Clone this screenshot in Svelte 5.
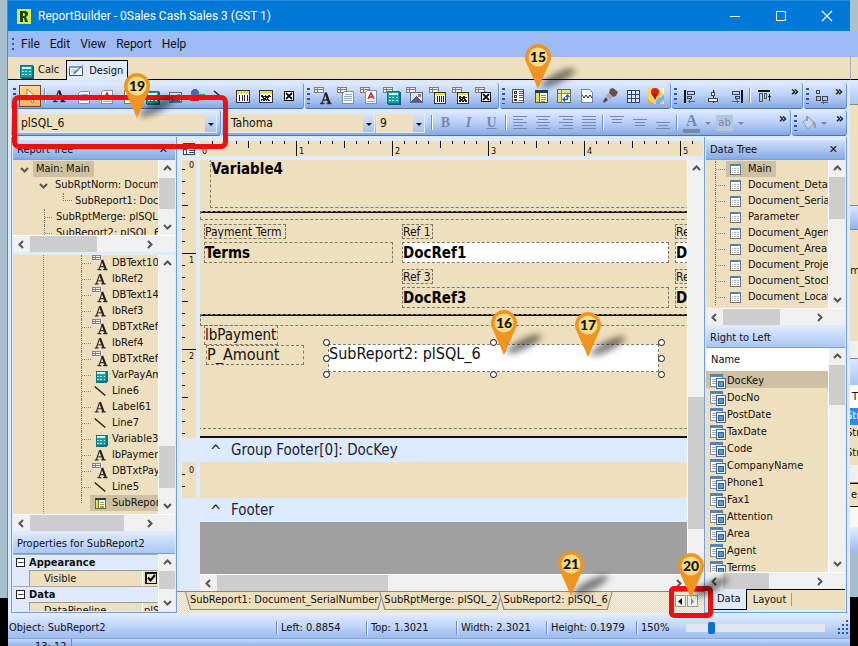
<script>
  const menus = ['File', 'Edit', 'View', 'Report', 'Help'];

  const standardTools = ['label', 'memo', 'rich', 'sysvar', 'calc', 'image', 'shapes', 'line', 'barcode', 'matrix', 'check'];
  const dataTools = ['db-label', 'db-memo', 'db-rich', 'db-calc', 'db-image', 'db-barcode', 'db-matrix', 'db-check'];
  const advancedTools = ['region', 'subreport', 'crosstab', 'pagebreak', 'paint', 'grid', 'map'];
  const alignTools = ['align-left', 'align-center', 'align-right'];

  const objects = [
    ['dbtext', 'DBText10'], ['label', 'lbRef2'], ['dbtext', 'DBText14'], ['label', 'lbRef3'],
    ['dbtext', 'DBTxtRef3'], ['label', 'lbRef4'], ['dbtext', 'DBTxtRef4'], ['calc', 'VarPayAmount'],
    ['line', 'Line6'], ['label', 'Label61'], ['line', 'Line7'], ['calc', 'Variable3'],
    ['label', 'lbPayment'], ['dbtext', 'DBTxtPayment'], ['line', 'Line5'], ['subreport', 'SubReport2']
  ];

  const pipelines = [
    'Main', 'Document_Detail', 'Document_SerialNumber', 'Parameter', 'Document_Agent',
    'Document_Area', 'Document_Project', 'Document_Stock', 'Document_Location'
  ];

  const fields = [
    'DocKey', 'DocNo', 'PostDate', 'TaxDate', 'Code', 'CompanyName', 'Phone1',
    'Fax1', 'Attention', 'Area', 'Agent', 'Terms'
  ];

  const pages = ['SubReport1: Document_SerialNumber', 'SubRptMerge: plSQL_2', 'SubReport2: plSQL_6'];
  const measures = ['Left: 0.8854', 'Top: 1.3021', 'Width: 2.3021', 'Height: 0.1979'];

  const pins = [
    { n: 15, x: 538, y: 89 },
    { n: 19, x: 137, y: 118 },
    { n: 16, x: 504, y: 355 },
    { n: 17, x: 588, y: 357 },
    { n: 21, x: 571, y: 596 },
    { n: 20, x: 691, y: 598 }
  ];

  const ticks = Array.from({ length: 120 }, (_, i) => i);
  const inches = Array.from({ length: 16 }, (_, i) => i);
  const handles = [
    [0, 0], [167, 0], [335, 0], [0, 16], [335, 16], [0, 32], [167, 32], [335, 32]
  ];

  let pipeline = $state('plSQL_6');
  let font = $state('Tahoma');
  let size = $state('9');
  let visible = $state(true);
</script>

{#snippet dbmark()}
  <path d="M.5 .5h9v5h-9zM.5 2.5h9M3.500 .5v5" fill="#eee" stroke="#7d7d7d" />
{/snippet}

{#snippet icon(name)}
  <svg class="icon" width="18" height="18" viewBox="0 0 18 18" aria-hidden="true" fill="none" shape-rendering="crispEdges">
    {#if name.startsWith('db-') && name !== 'db-label'}{@render dbmark()}{/if}
    {#if name === 'pointer'}
      <path d="M6 2v12l3-3 2 5 2-1-2-5h4z" fill="#fff" stroke="#a8772a" shape-rendering="auto" />
    {:else if name === 'label'}
      <g shape-rendering="auto"><path d="M8.500 4L5 14M3 14.500h4.500M10.500 14.500h5M6.500 11h6" stroke="#333" stroke-width="1.300" /><path d="M9 3.500l4 11" stroke="#222" stroke-width="2.400" /></g>
    {:else if name === 'dbtext' || name === 'db-label'}
      {@render dbmark()}
      <g shape-rendering="auto"><path d="M11.500 6L8 16M6 16.500h4.500M12.500 16.500h5M9 13h5" stroke="#333" stroke-width="1.300" /><path d="M11.500 5.500l4 11" stroke="#222" stroke-width="2.400" /></g>
    {:else if name === 'memo' || name === 'db-memo'}
      <path d="M7.500 4.500h9v12h-11v-10z" fill="#fff" stroke="#7d8fae" /><path d="M8 7.500h7M7 9.500h8M7 11.500h8M7 13.500h8" stroke="#8aa6cf" />
    {:else if name === 'rich' || name === 'db-rich'}
      <path d="M7.500 3.500h9v13h-11v-11z" fill="#fff" stroke="#7d8fae" /><path d="M8 12l3-6 3 6M9 10h4" stroke="#d0202f" stroke-width="1.500" shape-rendering="auto" /><path d="M7 14.500h8" stroke="#8aa6cf" />
    {:else if name === 'sysvar'}
      <path d="M5.500 3.500h11v13h-11z" fill="#fff7c8" stroke="#827b3b" /><path d="M8 6.500h6M8 9.500h6M8 12.500h6" stroke="#344" />
    {:else if name === 'calc' || name === 'db-calc'}
      <path d="M4.500 4.500h12v12h-12z" fill="#199d9d" stroke="#087580" /><path d="M6 7h9" stroke="#d8ffff" stroke-width="2" /><path d="M6 10.500h2m1 0h2m2 0h2M6 13.500h2m1 0h2m2 0h2" stroke="#c8f5f5" /><path d="M17 5v12H5" stroke="#175d70" />
    {:else if name === 'image' || name === 'db-image'}
      <path d="M4.500 5.500h12v10h-12z" fill="#dbe7fb" stroke="#586d92" /><path d="M5 15l5-6 6 6z" fill="#4b5e8d" /><path d="M12 7h3v3h-3z" fill="#e06a3a" />
    {:else if name === 'shapes'}
      <circle cx="7" cy="6" r="4" fill="#5a5fb8" /><path d="M8 7h9v6H8z" fill="#43a047" /><path d="M2 14l4-5 5 5z" fill="#d23" />
    {:else if name === 'line'}
      <path d="M3 4l12 10" stroke="#222" stroke-width="1.600" shape-rendering="auto" />
    {:else if name === 'barcode'}
      <path d="M2.500 3.500h13v12h-13z" fill="#fff" stroke="#333" /><path d="M3 4h12v3H3z" fill="#e8dc4a" /><path d="M5.500 8v6M8.500 8v6M10.500 8v6M13.500 8v6" stroke="#222" />
    {:else if name === 'db-barcode'}
      <path d="M5.500 5.500h11v11h-11z" fill="#fff" stroke="#333" /><path d="M6 6h10v2H6z" fill="#e8dc4a" /><path d="M8.500 9v6M10.500 9v6M12.500 9v6M14.500 9v6" stroke="#222" />
    {:else if name === 'matrix'}
      <path d="M2.500 3.500h13v12h-13z" fill="#fff" stroke="#333" /><path d="M3 4h12v3H3z" fill="#e8dc4a" /><path d="M4 8h2v1h2V8h1v1h2V8h2v1h1v1h-2v1h-1v1h1v1h1v1h-2v-1h-1v1H9v-1H8v1H6v-1H5v1H4v-2h2v-1H5v-1H4z" fill="#222" /><path d="M7 10h1v1H7zM9 11h1v1H9z" fill="#fff" />
    {:else if name === 'db-matrix'}
      <path d="M5.500 5.500h11v11h-11z" fill="#fff" stroke="#333" /><path d="M6 6h10v2H6z" fill="#e8dc4a" /><path d="M7 9h2v1h2V9h2v1h2v1h-2v1h1v1h1v2h-2v-1h-1v1h-2v-1H9v1H7v-2h1v-1H7z" fill="#222" /><path d="M9 11h1v1H9zM11 12h1v1h-1z" fill="#fff" />
    {:else if name === 'check'}
      <path d="M4.500 4.500h9v9h-9z" fill="#fff" stroke="#111" /><path d="M6 6l6 6M12 6l-6 6" stroke="#111" stroke-width="1.800" shape-rendering="auto" />
    {:else if name === 'db-check'}
      <path d="M6.500 5.500h9v9h-9z" fill="#fff" stroke="#111" /><path d="M8 7l6 6M14 7l-6 6" stroke="#111" stroke-width="1.800" shape-rendering="auto" />
    {:else if name === 'region'}
      <path d="M3.500 2.500h11v13h-11z" fill="#fff" stroke="#555" /><path d="M5.500 4.500h2v2h-2zM5.500 8.500h2v2h-2zM5.500 12.500h2v1h-2z" stroke="#333" /><path d="M9.500 4.500h4M9.500 6.500h4M9.500 8.500h4M9.500 10.500h4M9.500 13.500h4" stroke="#555" />
    {:else if name === 'subreport'}
      <path d="M3.500 3.500h12v12h-12z" fill="#fffce0" stroke="#4c5d24" /><path d="M3 3h13v3H3z" fill="#203d55" /><path d="M4 6h3v9H4z" fill="#e9e04d" /><path d="M7.500 6v10" stroke="#4c5d24" /><path d="M9 8.500h5M9 10.500h5M9 12.500h5M9 14.500h4" stroke="#86943b" />
    {:else if name === 'crosstab'}
      <path d="M2.500 2.500h13v13h-13z" fill="#fff" stroke="#5b6c50" /><path d="M3 3h3v3H3zM7 3h8v3H7zM3 7h3v8H3z" fill="#e7e18c" /><path d="M3 6.500h12M6.500 3v12" stroke="#7b8a60" /><path d="M8 12.500h4M12.500 8v5M10 10.500l-2 2 2 2M10.500 10l2-2 2 2" stroke="#23619b" stroke-width="1.300" shape-rendering="auto" />
    {:else if name === 'pagebreak'}
      <path d="M3.500 2.500h8l3 3v10h-11z" fill="#fff" stroke="#6d83b0" /><path d="M4 8l2 3 2-3 2 3 2-3 2 3" stroke="#222" shape-rendering="auto" />
    {:else if name === 'paint'}
      <g shape-rendering="auto"><path d="M9 2l3-1 5 4-2 4-3 1-4-4z" fill="#6b4e44" /><path d="M7 6l5 4-3 3-4-4z" fill="#a9a9b3" /><path d="M5 10l2 3-4 3-1-2z" fill="#4a4a58" /></g>
    {:else if name === 'grid'}
      <path d="M3.500 3.500h12v12h-12zM7.500 3v13M11.500 3v13M3 7.500h13M3 11.500h13" fill="#dce8ff" stroke="#2b3f86" />
    {:else if name === 'map'}
      <path d="M1 1h16v16H1z" fill="#f5d56c" /><path d="M10 1h7v6z" fill="#fff2c6" /><path d="M9 13l8-5v4l-5 5H9z" fill="#76b8e6" /><path d="M1 12l7 5H1z" fill="#efa93c" /><g shape-rendering="auto"><circle cx="8" cy="5" r="4" fill="#d5241b" /><path d="M5 7h6l-3 6z" fill="#b8160e" /></g>
    {:else if name === 'align-left'}
      <path d="M4 3v13" stroke="#111" stroke-width="2" /><path d="M6.500 4.500h7v3h-7zM6.500 9.500h4v2h-4z" stroke="#444" /><path d="M7 14.500h7M9.500 12.500l-2 2 2 2" stroke="#336aa8" />
    {:else if name === 'align-center'}
      <path d="M9 3v13" stroke="#111" /><path d="M7.500 5.500h3v3h-3zM4.500 11.500h9v3h-9z" fill="#eef4ff" stroke="#444" />
    {:else if name === 'align-right'}
      <path d="M15 3v13" stroke="#111" stroke-width="2" /><path d="M5.500 4.500h7v3h-7zM8.500 9.500h4v2h-4z" stroke="#444" /><path d="M5 14.500h7M9.500 12.500l2 2-2 2" stroke="#336aa8" />
    {:else if name === 'align-top'}
      <path d="M3 4h12" stroke="#111" stroke-width="2" /><path d="M4.500 6.500h3v8h-3zM9.500 6.500h2v5h-2z" stroke="#555" /><path d="M14.500 7v7M13 9.500h3" stroke="#222" />
    {:else if name === 'nudge'}
      <path d="M3.500 3.500h3v3h-3zM3.500 9.500h4v4h-4zM9.500 9.500h5v4h-5z" stroke="#444" /><path d="M8 15.500h7M10 14v3" stroke="#336aa8" />
    {:else if name === 'table'}
      <path d="M2.500 3.500h12v12h-12z" fill="#fff" stroke="#5d6475" /><path d="M2 3h13v3H2z" fill="#517fbd" /><path d="M4 8.500h9M4 10.500h9M4 12.500h9" stroke="#a1a7b5" stroke-dasharray="2 1" />
    {:else if name === 'field'}
      <path d="M1.500 2.500h12v12h-12z" fill="#fff" stroke="#7f8da6" /><path d="M1 2h13v3H1z" fill="#5681bd" /><path d="M3 7.500h5M3 9.500h5M3 11.500h5" stroke="#a1a7b5" /><path d="M7.500 6.500h9v10h-9z" fill="#eaf3ff" stroke="#47698f" /><path d="M9.500 9.500h5v5h-5z" fill="#5c97d3" stroke="#325f9c" />
    {:else if name === 'bucket'}
      <g shape-rendering="auto" stroke="#8b9bb5"><path d="M4 8l6-5 5 6-6 6z" fill="#cad6ea" /><path d="M8 2v5M14 8q3 3 2 6" stroke-width="2" /></g>
    {/if}
  </svg>
{/snippet}

{#snippet chevron(dir)}
  <svg class="chev" width="17" height="17" viewBox="0 0 17 17" aria-hidden="true">
    <path
      d={{ up: 'M5 10l3.500-3.500L12 10', down: 'M5 7l3.500 3.500L12 7', left: 'M10 5L6.500 8.500 10 12', right: 'M7 5l3.500 3.500L7 12' }[dir]}
      fill="none" stroke="#555" stroke-width="2" />
  </svg>
{/snippet}

{#snippet vscroll(before, thumb, after)}
  <div class="vscroll">
    {@render chevron('up')}
    <div style:flex={before}></div>
    <div class="thumb" style:flex={thumb}></div>
    <div style:flex={after}></div>
    {@render chevron('down')}
  </div>
{/snippet}

{#snippet hscroll(thumb, after)}
  <div class="hscroll">
    {@render chevron('left')}
    <div class="thumb" style:flex={thumb}></div>
    <div style:flex={after}></div>
    {@render chevron('right')}
  </div>
{/snippet}

{#snippet tool(name)}
  <button class="tool" aria-label={name}>{@render icon(name)}</button>
{/snippet}

{#snippet lines(rows, y)}
  <button class="tool" aria-label="Align text">
    <svg width="18" height="18" viewBox="0 0 18 18" shape-rendering="crispEdges" aria-hidden="true">
      {#each rows as [x, w], i}
        <rect {x} y={y + i * 3} width={w} height="1" fill="#7489ab" />
      {/each}
    </svg>
  </button>
{/snippet}

{#snippet drop()}
  <svg class="drop" width="11" height="24" viewBox="0 0 11 24" aria-hidden="true"><path d="M3 11h6l-3 3z" fill="#111" /></svg>
{/snippet}

{#snippet greyDrop()}
  <svg width="12" height="18" viewBox="0 0 12 18" aria-hidden="true"><path d="M3 8h6l-3 3z" fill="#7489ab" /></svg>
{/snippet}

{#snippet vruler(height, first)}
  <svg class="vruler" width="14" {height} shape-rendering="crispEdges" aria-hidden="true">
    {#each ticks as i}
      {#if i > 0 && (i * 12 - first) < height}
        <rect x="0" y={i * 12 - first} width={i % 8 === 0 ? 14 : i % 4 === 0 ? 6 : 3} height="1" fill="#111" />
      {/if}
    {/each}
    {#each inches as i}
      {#if i * 96 < height}<text x="7" y={i * 96 + (i ? 10 : 11) - first}>{i}</text>{/if}
    {/each}
  </svg>
{/snippet}

<div class="desktop">
  <div class="edge"></div>

  <main class="window">
    <header class="title">
      <svg width="14" height="15" viewBox="0 0 14 15" aria-hidden="true">
        <path d="M0 0h14v15H0z" fill="#d8e94e" /><path d="M3 2h5q3 0 3 3 0 2-2 3l2 5H8L7 9H6v4H3zM6 4v3h1q1 0 1-1.500T7 4z" fill="#17460f" fill-rule="evenodd" />
      </svg>
      <h1>ReportBuilder - 0Sales Cash Sales 3 (GST 1)</h1>
      <div class="controls">
        <button aria-label="Minimize"><svg width="12" height="12" viewBox="0 0 12 12"><path d="M1 6.500h10" stroke="#fff" /></svg></button>
        <button aria-label="Maximize"><svg width="12" height="12" viewBox="0 0 12 12"><path d="M1.500 1.500h9v9h-9z" fill="none" stroke="#fff" /></svg></button>
        <button aria-label="Close"><svg width="12" height="12" viewBox="0 0 12 12"><path d="M1 1l10 10M11 1L1 11" stroke="#fff" stroke-width="1.200" /></svg></button>
      </div>
    </header>

    <nav class="menu">
      <i class="grip short"></i>
      {#each menus as m}<button>{m}</button>{/each}
    </nav>

    <div class="modes">
      <button class="mode">{@render icon('calc')}Calc</button>
      <button class="mode on">
        <svg width="18" height="18" viewBox="0 0 18 18" aria-hidden="true">
          <path d="M1.500 4.500h13v9h-13z" fill="#fff" stroke="#40566f" /><path d="M1 4h14v2H1z" fill="#7c9cc6" /><path d="M16 2l-8 9-3 2 1-3z" fill="#4b78a8" /><path d="M3 8h5M3 10h3" stroke="#9ab" />
        </svg>Design
      </button>
    </div>

    <div class="bars">
      <div class="bar">
        <div class="seg">
          <i class="grip"></i>
          <button class="tool picked" aria-label="Select">{@render icon('pointer')}</button>
          <i class="sep"></i>
          {#each standardTools as t}{@render tool(t)}{/each}
        </div>
        <div class="seg">
          <i class="grip"></i>
          {#each dataTools as t}{@render tool(t)}{/each}
        </div>
        <div class="seg">
          <i class="grip"></i>
          {#each advancedTools as t}{@render tool(t)}{/each}
        </div>
        <div class="seg grow">
          <i class="grip"></i>
          {#each alignTools as t}{@render tool(t)}{/each}
          <i class="sep"></i>
          {@render tool('align-top')}
          <button class="more">»</button>
        </div>
        <div class="seg tail">
          <i class="grip"></i>
          {@render tool('nudge')}
          <button class="more">»</button>
        </div>
      </div>

      <div class="bar">
        <div class="seg">
          <i class="grip"></i>
          <label class="combo pipe">
            <select bind:value={pipeline} aria-label="Data pipeline"><option>plSQL_6</option><option>plSQL_2</option></select>
            {@render drop()}
          </label>
        </div>
        <div class="seg grow">
          <label class="combo face">
            <select bind:value={font} aria-label="Font"><option>Tahoma</option></select>
            {@render drop()}
          </label>
          <label class="combo points">
            <select bind:value={size} aria-label="Font size"><option>9</option><option>10</option></select>
            {@render drop()}
          </label>
          <i class="sep"></i>
          <button class="tool letter b">B</button>
          <button class="tool letter i">I</button>
          <button class="tool letter u">U</button>
          <i class="sep"></i>
          {@render lines([[2, 14], [2, 10], [2, 14], [2, 10], [2, 14]], 2)}
          {@render lines([[2, 14], [4, 10], [2, 14], [4, 10], [2, 14]], 2)}
          {@render lines([[2, 14], [6, 10], [2, 14], [6, 10], [2, 14]], 2)}
          {@render lines([[2, 14], [2, 14], [2, 14], [2, 14], [2, 14]], 2)}
          <i class="sep"></i>
          {@render lines([[2, 14], [4, 10], [4, 10]], 2)}
          {@render lines([[2, 14], [4, 10], [4, 10]], 5)}
          {@render lines([[2, 14], [4, 10], [2, 14]], 8)}
          <i class="sep"></i>
          <button class="tool letter color">A</button>
          {@render greyDrop()}
          <button class="tool letter mark">ab</button>
          {@render greyDrop()}
          <button class="more">»</button>
        </div>
        <div class="seg tail two">
          <i class="grip"></i>
          {@render tool('bucket')}
          {@render greyDrop()}
          <button class="more">»</button>
        </div>
      </div>
    </div>

    <div class="body">
      <aside class="panel left">
        <h2 class="dark">Report Tree <button aria-label="Close report tree">✕</button></h2>
        <div class="pane outline">
          <ul class="tree">
            <li class="root">{@render chevron('down')}<span class="hit">Main: Main</span></li>
            <li class="kid">{@render chevron('down')}<span>SubRptNorm: Document_Detail</span></li>
            <li class="leaf"><i class="elbow"></i><span>SubReport1: Document_SerialNumber</span></li>
            <li class="twig"><i class="elbow"></i><span>SubRptMerge: plSQL_2</span></li>
            <li class="twig"><i class="elbow"></i><span>SubReport2: plSQL_6</span></li>
          </ul>
          {@render vscroll(1, 31, 9)}
        </div>
        {@render hscroll(66, 44)}
        <div class="gap"></div>
        <div class="pane objects">
          <ul class="tree branch">
            {#each objects as [kind, name], i}
              <li class:last={i === objects.length - 1}><i class="dots"></i><span class="node">{@render icon(kind)}{name}</span></li>
            {/each}
          </ul>
          {@render vscroll(172, 42, 9)}
        </div>
        {@render hscroll(93, 17)}
        <div class="gap"></div>
        <h2>Properties for SubReport2</h2>
        <div class="pane props">
          <div class="list">
            <div class="cat"><button aria-label="Collapse">−</button>Appearance</div>
            <div class="prop">
              <label for="vis">Visible</label>
              <span class="tick">
                <input id="vis" type="checkbox" bind:checked={visible} />
                {#if visible}<svg width="12" height="12" viewBox="0 0 12 12" aria-hidden="true"><path d="M3 5.500l2.500 3L10 3" fill="none" stroke="#000" stroke-width="2" /></svg>{/if}
              </span>
            </div>
            <div class="cat"><button aria-label="Collapse">−</button>Data</div>
            <div class="prop"><span class="key">DataPipeline</span><span>plSQL_6</span></div>
          </div>
          {@render vscroll(0, 18, 5)}
        </div>
      </aside>

      <section class="center">
        <div class="toprule">
          <svg class="corner" width="14" height="15" viewBox="0 0 14 15" shape-rendering="crispEdges" aria-hidden="true">
            <path d="M1.500 2.500h11v11h-11z" fill="#fff" stroke="#29466b" /><path d="M1 3h12v2H1z" fill="#6c93c8" /><path d="M4.500 5v8M2 8.500h3M7 7.500h5M7 9.500h5M7 11.500h5" stroke="#29466b" />
          </svg>
          <svg class="hruler" height="15" shape-rendering="crispEdges" aria-hidden="true">
            {#each ticks as i}
              {#if i > 0}<rect x={i * 12} y="0" width="1" height={i % 8 === 0 ? 15 : i % 4 === 0 ? 7 : 3} fill="#111" />{/if}
            {/each}
            {#each inches as i}<text x={i * 96 + (i ? 3 : 2)} y="13">{i}</text>{/each}
          </svg>
        </div>

        <div class="work">
          <div class="bands">
            <div class="band">
              {@render vruler(278, 3)}
              <div class="surface detail">
                <div class="box big high" style:left="10px" style:top="-1px" style:width="700px" style:height="49px">Variable4</div>
                <div class="rule" style:top="51px"></div>
                <div class="box" style:left="0px" style:top="51px" style:width="700px" style:height="9px"></div>
                <div class="box small" style:left="4px" style:top="64px" style:width="82px" style:height="15px">Payment Term</div>
                <div class="box big" style:left="4px" style:top="82px" style:width="189px" style:height="21px">Terms</div>
                <div class="box small" style:left="202px" style:top="64px" style:width="31px" style:height="15px">Ref 1</div>
                <div class="box big white" style:left="202px" style:top="82px" style:width="267px" style:height="21px">DocRef1</div>
                <div class="box small" style:left="202px" style:top="109px" style:width="31px" style:height="15px">Ref 3</div>
                <div class="box big" style:left="202px" style:top="127px" style:width="267px" style:height="21px">DocRef3</div>
                <div class="box small" style:left="475px" style:top="64px" style:width="31px" style:height="15px">Ref 2</div>
                <div class="box big white" style:left="475px" style:top="82px" style:width="267px" style:height="21px">DocRef2</div>
                <div class="box small" style:left="475px" style:top="109px" style:width="31px" style:height="15px">Ref 4</div>
                <div class="box big" style:left="475px" style:top="127px" style:width="267px" style:height="21px">DocRef4</div>
                <div class="rule" style:top="154px"></div>
                <div class="box" style:left="0px" style:top="154px" style:width="700px" style:height="12px"></div>
                <div class="box mid" style:left="4px" style:top="165px" style:width="74px" style:height="20px">lbPayment</div>
                <div class="box light" style:left="6px" style:top="185px" style:width="98px" style:height="20px">P_Amount</div>
                <div class="box light white high" style:left="128px" style:top="184px" style:width="331px" style:height="28px">SubReport2: plSQL_6</div>
                {#each handles as [x, y]}
                  <i class="handle" style:left="{123 + x}px" style:top="{179 + y}px"></i>
                {/each}
                <div class="box lid" style:left="-2px" style:top="260px" style:width="700px" style:height="9px"></div>
                <div class="rule" style:top="276px"></div>
              </div>
            </div>
            <div class="bandhead"><b>^</b>Group Footer[0]: DocKey</div>
            <div class="band">
              {@render vruler(36, 0)}
              <div class="surface"></div>
            </div>
            <div class="bandhead"><b>^</b>Footer</div>
            <div class="band void"><div class="surface"></div></div>
            <div class="under">{@render hscroll(171, 283)}</div>
          </div>
          {@render vscroll(220, 132, 29)}
        </div>

        <div class="pages">
          {#each pages as p}<button class="page"><span>{p}</span></button>{/each}
          <div class="spin"><button aria-label="Previous tab"><svg width="9" height="9" viewBox="0 0 9 9"><path d="M6 1v7L2 4.500z" fill="#111" /></svg></button><button aria-label="Next tab"><svg width="9" height="9" viewBox="0 0 9 9"><path d="M3 1v7l3-3.500z" fill="#888" /></svg></button></div>
        </div>
      </section>

      <aside class="panel right">
        <h2 class="dark">Data Tree <button aria-label="Close data tree">✕</button></h2>
        <div class="pane data">
          <ul class="tree source">
            {#each pipelines as p, i}
              <li><i class="dots"></i><span class="node" class:hit={i === 0}>{@render icon('table')}{p}</span></li>
            {/each}
          </ul>
          {@render vscroll(0, 41, 71)}
        </div>
        {@render hscroll(57, 31)}
        <div class="gap"></div>
        <h2>Right to Left</h2>
        <div class="pane fields">
          <table>
            <thead><tr><th>Name</th></tr></thead>
            <tbody>
              {#each fields as f, i}
                <tr class:sel={i === 0}><td><span>{@render icon('field')}{f}</span></td></tr>
              {/each}
            </tbody>
          </table>
          {@render vscroll(0, 40, 148)}
        </div>
        {@render hscroll(46, 42)}
        <div class="foot"><button class="on">Data</button><button class="off"><span>Layout</span></button></div>
      </aside>
    </div>

    <footer class="status">
      <span class="object">Object: SubReport2</span>
      {#each measures as m}<span class="cell">{m}</span>{/each}
      <span class="cell zoom">150%</span>
      <input type="range" min="0" max="100" value="17" aria-label="Zoom" />
      <svg class="size" width="12" height="16" viewBox="0 0 12 16" aria-hidden="true"><path d="M9 0h2v2H9zM5 4h2v2H5zM9 4h2v2H9zM1 8h2v2H1zM5 8h2v2H5zM9 8h2v2H9zM1 12h2v2H1zM5 12h2v2H5zM9 12h2v2H9z" fill="#33558f" /></svg>
    </footer>
    <div class="lower"><span>13: 12</span></div>
  </main>

  <div class="behind">
    <div class="b1"></div><div class="b2"></div><div class="b3"></div><div class="b4"></div>
    <div class="b5"></div><div class="b6"></div><div class="b7">um</div><div class="b8"></div>
    <div class="b9"></div><div class="b10">T</div><div class="b11">Str</div><div class="b12">Str</div><div class="b12">Str</div>
    <div class="b8"></div><div class="b13">e</div><div class="b14"></div><div class="b15"></div><div class="b16"></div><div class="b17"></div>
  </div>

  <div class="callout wide"></div>
  <div class="callout spot"></div>
  {#each pins as p}
    <div class="pin" style:left="{p.x - 13}px" style:top="{p.y - 46}px">
      <svg width="60" height="50" viewBox="0 0 60 50" aria-hidden="true">
        <ellipse class="shade" cx="33" cy="35" rx="19" ry="5" transform="rotate(-27 33 35)" />
        <path d="M13 46L2 21A13 13 0 1 1 24 21z" fill="#ef9420" />
        <circle cx="13" cy="14" r="9.500" fill="#f8dc86" />
      </svg>
      <b>{p.n}</b>
    </div>
  {/each}
</div>

<style>
  :global(body) { margin: 0; }
  * { box-sizing: border-box; }
  button { font: inherit; color: inherit; background: none; border: 0; padding: 0; margin: 0; }
  h1, h2, ul { margin: 0; padding: 0; font-weight: 400; list-style: none; }
  svg { display: block; flex: none; }

  .desktop {
    --sand: #eedfbe;
    --ice: #dfeafa;
    --pick: #cdc0a3;
    position: relative;
    display: flex;
    height: 100vh;
    overflow: hidden;
    font: 11px/16px 'DejaVu Sans Condensed', 'Noto Sans', sans-serif;
    color: #111;
    background: #000;
  }
  .edge {
    width: 8px;
    flex: none;
    background:
      linear-gradient(#3d8fd6, #3d8fd6) right top / 1px calc(100% - 48px) no-repeat,
      linear-gradient(#a9c1ce, #a9c1ce) top / 100% calc(100% - 48px) no-repeat #000;
  }
  .window { flex: 1; min-width: 0; display: flex; flex-direction: column; background: var(--ice); }

  .title { display: flex; align-items: center; height: 31px; flex: none; padding-left: 9px; background: #0078d7; color: #fff; border-top: 1px solid #2689dc; }
  .title h1 { font: 12px/16px Roboto, sans-serif; margin-left: 7px; flex: 1; white-space: nowrap; }
  .controls { display: flex; }
  .controls button { width: 46px; height: 30px; display: grid; place-items: center; }

  .menu { display: flex; align-items: center; gap: 10px; height: 26px; flex: none; background: #9dbcf5; padding-left: 4px; font: 12px/16px Roboto, sans-serif; }
  .menu .grip { margin-right: -3px; }

  .modes { display: flex; align-items: flex-end; height: 23px; flex: none; padding-left: 8px; background: var(--sand); border-bottom: 1px solid #000; }
  .mode { display: flex; align-items: center; gap: 4px; height: 18px; padding: 0 7px 0 0; }
  .mode.on { height: 20px; background: var(--ice); border: 1px solid #000; border-bottom: 0; margin-bottom: -1px; padding: 0 4px 0 1px; gap: 3px; }

  .bars { padding: 3px 3px 1px; display: flex; flex-direction: column; gap: 1px; flex: none; background: #dbe7fb; }
  .bar { display: flex; gap: 1px; }
  .seg {
    display: flex; align-items: center; height: 26px; padding: 0 3px 0 2px;
    background: linear-gradient(#dfebff, #b9d0f7 50%, #86a9e4);
    border-bottom: 1px solid #4c74b8; border-right: 1px solid #6f95d4; border-radius: 3px;
  }
  .seg.grow { flex: 1; min-width: 0; overflow: hidden; }
  .grip { width: 3px; height: 16px; margin-right: 1px; background: repeating-linear-gradient(#33558f 0 2px, transparent 2px 5px); flex: none; }
  .grip.short { height: 12px; width: 2px; }
  .sep { width: 1px; height: 15px; background: #6a8ccb; box-shadow: 1px 0 #fff; margin: 0 2px; flex: none; }
  .tool { width: 23px; height: 22px; display: grid; place-items: center; flex: none; }
  .tool.picked { width: 22px; margin: 0 1px 0 2px; border: 1px solid #6a4b1c; background: linear-gradient(#ffd79b, #ffb25a); }
  .more { margin-left: auto; align-self: flex-start; font: bold 14px/16px 'DejaVu Sans Condensed', sans-serif; }
  .tail { width: 43px; }
  .tail.two { width: 55px; padding-right: 2px; }
  .tail.two .tool { width: 20px; }
  .combo { display: flex; height: 20px; background: var(--sand); border: 1px solid #e9e9e4; overflow: hidden; flex: none; }
  .combo select { appearance: none; flex: 1; min-width: 0; border: 0; background: none; padding: 0 0 0 3px; font: 12px/16px 'DejaVu Sans Condensed', sans-serif; color: #111; border-radius: 0; }
  .drop { background: linear-gradient(#dbe8ff, #9bb9ee); margin-top: -2px; }
  .pipe { width: 200px; }
  .face { width: 148px; margin-left: 3px; }
  .points { width: 49px; margin: 0 4px 0 1px; }
  .letter { font: bold 14px/16px 'Liberation Serif', serif; color: #7489ab; }
  .letter.i { font-style: italic; }
  .letter.u { text-decoration: underline; }
  .letter.color { font-size: 16px; border-bottom: 4px solid #7489ab; height: 20px; width: 17px; margin: 0 2px 0 4px; }
  .letter.mark { font: 11px/12px 'DejaVu Sans Condensed', sans-serif; height: 16px; width: 17px; background: #b5c5e0; margin: 0 2px; }

  .body { display: flex; flex: 1; min-height: 0; padding: 0 3px; }
  .panel { display: flex; flex-direction: column; border: 1px solid #6f9fdc; border-top: 0; padding: 3px 1px 1px; flex: none; }
  .left { width: 166px; }
  .right { width: 143px; }
  .panel h2 { display: flex; justify-content: space-between; align-items: center; height: 20px; flex: none; padding: 0 4px; font-size: 11px; white-space: nowrap; background: linear-gradient(#d9e7fd, #a9c7f5); border-bottom: 1px solid #7ba0d8; }
  .panel h2.dark { background: linear-gradient(#cfe0fb, #84aae6); }
  .panel h2 button { font: bold 11px/16px 'DejaVu Sans', sans-serif; padding: 0 3px; }
  .pane { display: flex; min-height: 0; background: var(--sand); overflow: hidden; }
  .gap { height: 3px; flex: none; }
  .outline { height: 75px; flex: none; }
  .objects { flex: 1; }
  .props { height: 57px; flex: none; }
  .data { height: 148px; flex: none; }
  .fields { flex: 1; }

  .vscroll { width: 17px; flex: none; display: flex; flex-direction: column; background: #f0f0f0; border-left: 1px solid #fff; }
  .hscroll { height: 17px; flex: none; display: flex; background: #f0f0f0; border-top: 1px solid #fff; }
  .panel > .hscroll { padding-right: 17px; }
  .thumb { background: #cdcdcd; }

  .tree { flex: 1; min-width: 0; overflow: hidden; }
  .tree li { display: flex; align-items: center; height: 16px; white-space: nowrap; }
  .tree span { flex: none; padding: 0 4px 0 3px; }
  .tree .icon { width: 16px; height: 16px; }
  .outline .tree { padding-top: 1px; }
  .hit { background: var(--pick); }
  .root { padding-left: 3px; }
  .kid { padding-left: 22px; }
  .leaf { padding-left: 50px; }
  .twig { padding-left: 31px; }
  .elbow { width: 9px; height: 8px; flex: none; align-self: flex-start; border-left: 1px dotted #777; border-bottom: 1px dotted #777; }
  .twig .elbow { height: 16px; border-bottom: 0; background: repeating-linear-gradient(90deg, #888 0 1px, transparent 1px 2px) 0 8px / 100% 1px no-repeat; }
  .dots { width: 10px; height: 16px; flex: none; border-left: 1px dotted #777; background: repeating-linear-gradient(90deg, #888 0 1px, transparent 1px 2px) 0 8px / 100% 1px no-repeat; }
  .branch { padding-left: 68px; background: repeating-linear-gradient(#888 0 1px, transparent 1px 2px) 30px 0 / 1px 100% no-repeat; }
  .branch .node { display: flex; align-items: center; gap: 4px; padding-left: 1px; }
  .branch .last { background: linear-gradient(var(--pick), var(--pick)) 9px 0 no-repeat; }
  .branch .last .dots { height: 8px; align-self: flex-start; }
  .source { padding: 1px 0 0 9px; }
  .source .node { display: flex; align-items: center; gap: 4px; padding-left: 2px; }
  .source .dots { width: 11px; }

  .props .list { flex: 1; min-width: 0; background: var(--ice); }
  .cat { display: flex; align-items: center; gap: 4px; height: 16px; padding-left: 3px; font-weight: bold; border-top: 1px solid #aaa; }
  .cat button { width: 9px; height: 9px; border: 1px solid #222; display: grid; place-items: center; font: 9px/7px 'DejaVu Sans', sans-serif; background: #fff; }
  .prop { display: flex; height: 16px; margin-left: 16px; border: solid #999; border-width: 1px 0 0 1px; background: var(--sand); }
  .prop > :first-child { width: 112px; padding-left: 14px; flex: none; }
  .prop > :last-child { border-left: 1px solid #fff; white-space: nowrap; padding-left: 1px; }
  .tick { position: relative; }
  .tick input { appearance: none; display: block; width: 12px; height: 12px; margin: 1px; border: solid #111; border-width: 2px 1px 1px 2px; }
  .tick svg { position: absolute; left: 2px; top: 1px; pointer-events: none; }

  .center { flex: 1; min-width: 0; display: flex; flex-direction: column; }
  .toprule { display: flex; gap: 4px; padding: 4px 1px 4px 5px; overflow: hidden; }
  .corner { background: var(--sand); }
  .hruler { flex: 1; min-width: 0; width: 0; background: var(--sand); }
  .vruler { background: var(--sand); }
  text { font: 9px 'DejaVu Sans Condensed', sans-serif; fill: #111; }
  .work { display: flex; flex: 1; min-height: 0; padding: 0 0 0 5px; background: #f0f0f0; }
  .bands { flex: 1; min-width: 0; display: flex; flex-direction: column; }
  .work { background: linear-gradient(90deg, var(--ice) 60%, #f0f0f0 60%); }
  .bands { background: var(--ice); }
  .work > .vscroll { margin-bottom: 16px; }
  .band { display: flex; gap: 4px; flex: none; }
  .surface { position: relative; flex: 1; min-width: 0; overflow: hidden; background: var(--sand); }
  .band.void { flex: 1; min-height: 0; padding-left: 18px; }
  .void .surface { background: #a0a0a0; }
  .under { padding-left: 18px; }
  .bandhead { height: 24px; flex: none; display: flex; align-items: center; padding-left: 28px; background: linear-gradient(#dcebff, #dcebff) 18px 0 no-repeat; font-size: 15px; color: #223; }
  .bandhead b { width: 21px; font-weight: 400; padding-top: 2px; }
  .box { position: absolute; border: 1px dashed #827a68; white-space: nowrap; display: flex; align-items: center; overflow: hidden; }
  .box.high { align-items: flex-start; line-height: 18px; }
  .box.lid { border-top: 0; }
  .small { font-size: 12px; }
  .mid { font-size: 15px; }
  .light { font-size: 16px; }
  .big { font-size: 15px; font-weight: bold; color: #000; }
  .white { background-color: #fff; }
  .rule { position: absolute; left: 0; right: 0; height: 2px; background: #111; }
  .handle { position: absolute; width: 7px; height: 7px; border: 1px solid #111; border-radius: 50%; background: #fff; }

  .pages { display: flex; align-items: flex-start; height: 22px; flex: none; padding-left: 8px; border-top: 1px solid #888; background: repeating-conic-gradient(#f4eee0 0 25%, #e9dcc0 0 50%) 0 0 / 2px 2px; }
  .page { height: 18px; margin-right: -4px; padding: 0 1px 1px; background: #888; clip-path: polygon(0 0, 100% 0, calc(100% - 5px) 100%, 5px 100%); }
  .page span { display: block; padding: 0 4px 1px; background: var(--sand); clip-path: polygon(0 0, 100% 0, calc(100% - 5px) 100%, 5px 100%); }
  .spin { display: flex; gap: 1px; margin: 3px 6px 0 auto; }
  .spin button { width: 11px; height: 12px; display: grid; place-items: center; border: 1px solid #999; background: #f0f0f0; }

  table { flex: 1; min-width: 0; width: 0; border-collapse: collapse; display: block; overflow: hidden; }
  thead, tbody, tr, th, td { display: block; }
  th { height: 23px; padding: 4px 5px; background: #fff; text-align: left; font-weight: 400; }
  td { height: 17px; padding-left: 3px; }
  td span { display: flex; align-items: center; height: 17px; white-space: nowrap; }
  .sel { background: var(--pick); }
  .foot { display: flex; height: 21px; margin-bottom: 1px; flex: none; background: var(--sand); padding-left: 5px; }
  .foot .off { padding: 0 6px; border-top: 1px solid #000; flex: 1; text-align: left; }
  .foot .off span { padding-right: 5px; border-right: 1px solid #999; }
  .foot .on { flex: none; padding: 0 5px; background: var(--ice); border: 1px solid #000; border-top: 0; }

  .status { display: flex; align-items: center; height: 25px; flex: none; background: linear-gradient(#e3eeff, #c2d7fb 50%, #9bbaf0); padding-top: 5px; }
  .object { width: 268px; padding-left: 1px; }
  .cell { width: 90px; padding-left: 4px; border-left: 1px solid #6a8ccb; height: 14px; line-height: 14px; box-shadow: inset 1px 0 #fff; }
  .zoom { width: 50px; }
  .status input { appearance: none; flex: 1; min-width: 0; height: 8px; margin: 0 12px 0 0; background: #e0e6ef; }
  .status input::-webkit-slider-thumb { appearance: none; width: 7px; height: 12px; background: #0f70cc; border-radius: 2px; }
  .size { margin-right: 1px; }
  .lower { height: 8px; flex: none; overflow: hidden; padding-left: 27px; background: linear-gradient(#c5d8fb, #94b4ec); border-top: 1px solid #88a8e0; }
  .lower span { display: inline-block; margin-top: -10px; padding-right: 4px; border-right: 1px solid #6a8ccb; }

  .behind { width: 8px; flex: none; overflow: hidden; display: flex; flex-direction: column; background: var(--sand); }
  .behind > div { flex: none; overflow: hidden; }
  .b1 { height: 31px; background: #a9c1ce; }
  .b2 { height: 26px; background: #9dbcf5; }
  .b3 { height: 23px; border-bottom: 1px solid #000; border-left: 1px solid #aab; }
  .b4 { height: 25px; background: linear-gradient(#dfebff, #a9c6f6); border-bottom: 1px solid #888; }
  .b5 { height: 100px; }
  .b6 { height: 25px; background: linear-gradient(#d9e7fd, #8fb3ec); border: solid #888; border-width: 1px 0; }
  .b7 { height: 111px; padding-top: 33px; text-indent: -6px; }
  .b8 { height: 18px; background: #f0f0f0; border-bottom: 1px solid #888; }
  .b9 { height: 26px; background: linear-gradient(#d9e7fd, #a9c7f5); }
  .b10 { height: 23px; background: #fff; padding: 4px 0 0 2px; }
  .b11 { height: 17px; background: #2f8be6; color: #fff; text-indent: -4px; }
  .b12 { height: 20px; text-indent: -4px; }
  .b13 { height: 24px; border: solid #111; border-width: 1px 0; padding: 3px 1px; }
  .b14 { height: 20px; background: #f8f8f8; }
  .b15 { height: 25px; background: linear-gradient(#e3eeff, #9bbaf0); }
  .b16 { height: 45px; background: #a3bfcf; }
  .behind > .b17 { flex: 1; background: #000; }

  .callout { position: absolute; border: 5px solid #ed1010; border-radius: 7px; }
  .callout.wide { left: 12px; top: 95px; width: 216px; height: 54px; }
  .callout.spot { left: 669px; top: 586px; width: 44px; height: 32px; border-radius: 5px; }
  .pin { position: absolute; width: 60px; height: 50px; pointer-events: none; }
  .pin b { position: absolute; left: 0; top: 6px; width: 26px; text-align: center; font: 900 14px/16px Lato, sans-serif; }
  .shade { fill: #000; opacity: 0.5; filter: blur(3px); }
</style>
